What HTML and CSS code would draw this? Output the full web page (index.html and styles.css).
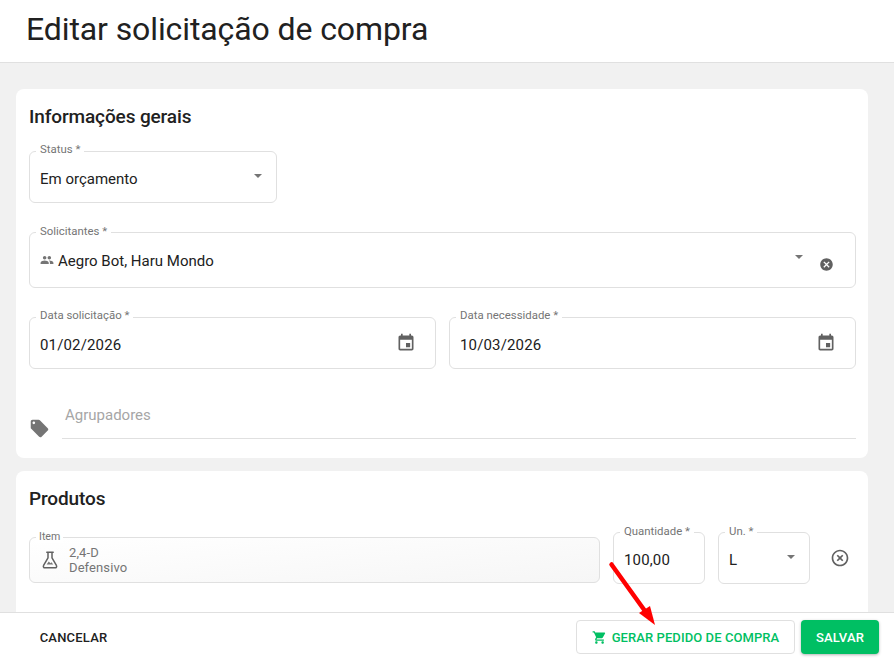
FILE: index.html
```html
<!DOCTYPE html>
<html lang="pt-BR">
<head>
<meta charset="utf-8">
<title>Editar solicitação de compra</title>
<link rel="stylesheet" href="styles.css">
</head>
<body>
<div class="page">
  <header class="topbar"><h1>Editar solicitação de compra</h1></header>
  <main class="content">
    <section class="card card-general">
      <h2>Informações gerais</h2>
      <div class="field field-status">
        <span class="float-label">Status *</span>
        <span class="value">Em orçamento</span>
        <span class="caret"></span>
      </div>
      <div class="field field-people">
        <span class="float-label">Solicitantes *</span>
        <svg class="icon-people" viewBox="0 0 24 24"><path d="M16 11c1.66 0 2.99-1.34 2.99-3S17.66 5 16 5c-1.66 0-3 1.34-3 3s1.34 3 3 3zm-8 0c1.66 0 2.99-1.34 2.99-3S9.66 5 8 5C6.34 5 5 6.34 5 8s1.34 3 3 3zm0 2c-2.33 0-7 1.17-7 3.5V19h14v-2.5c0-2.33-4.67-3.5-7-3.5zm8 0c-.29 0-.62.02-.97.05 1.16.84 1.97 1.97 1.97 3.45V19h6v-2.5c0-2.33-4.67-3.5-7-3.5z"/></svg>
        <span class="value">Aegro Bot, Haru Mondo</span>
        <span class="caret caret-people"></span>
        <svg class="icon-clear" viewBox="0 0 24 24"><path d="M12 2C6.47 2 2 6.47 2 12s4.47 10 10 10 10-4.47 10-10S17.53 2 12 2zm5 13.59L15.59 17 12 13.41 8.41 17 7 15.59 10.59 12 7 8.41 8.41 7 12 10.59 15.59 7 17 8.41 13.41 12 17 15.59z"/></svg>
      </div>
      <div class="date-row">
        <div class="field field-date">
          <span class="float-label">Data solicitação *</span>
          <span class="value value-date">01/02/2026</span>
          <svg class="icon-event" viewBox="0 0 24 24"><path d="M17 12h-5v5h5v-5zM16 1v2H8V1H6v2H5c-1.11 0-1.99.9-1.99 2L3 19c0 1.1.89 2 2 2h14c1.1 0 2-.9 2-2V5c0-1.1-.9-2-2-2h-1V1h-2zm3 18H5V8h14v11z"/></svg>
        </div>
        <div class="field field-date">
          <span class="float-label">Data necessidade *</span>
          <span class="value value-date">10/03/2026</span>
          <svg class="icon-event" viewBox="0 0 24 24"><path d="M17 12h-5v5h5v-5zM16 1v2H8V1H6v2H5c-1.11 0-1.99.9-1.99 2L3 19c0 1.1.89 2 2 2h14c1.1 0 2-.9 2-2V5c0-1.1-.9-2-2-2h-1V1h-2zm3 18H5V8h14v11z"/></svg>
        </div>
      </div>
      <div class="tags-row">
        <svg class="icon-tag" viewBox="0 0 24 24"><path d="M21.41 11.58l-9-9C12.05 2.22 11.55 2 11 2H4c-1.1 0-2 .9-2 2v7c0 .55.22 1.05.59 1.42l9 9c.36.36.86.58 1.41.58.55 0 1.05-.22 1.41-.59l7-7c.37-.36.59-.86.59-1.41 0-.55-.23-1.06-.59-1.42zM5.5 7C4.67 7 4 6.33 4 5.5S4.67 4 5.5 4 7 4.67 7 5.5 6.33 7 5.5 7z"/></svg>
        <div class="tags-input">Agrupadores</div>
      </div>
    </section>
    <section class="card card-products">
      <h2>Produtos</h2>
      <div class="product-row">
        <div class="field field-item">
          <span class="float-label label-item">Item</span>
          <svg class="icon-flask" viewBox="0 0 16 18"><path class="flask-outline" d="M4.8 1.2h6.4M6 1.2v5.6L1.6 14.4c-.7 1.1.1 2.4 1.3 2.4h10.2c1.2 0 2-1.3 1.3-2.4L10 6.8V1.2"/><path class="flask-liquid" d="M4.6 13.6l2.2-3 1.6 1.6 1-1 1.9 2.4z"/></svg>
          <div class="item-text"><span>2,4-D</span><span>Defensivo</span></div>
        </div>
        <div class="field field-qty">
          <span class="float-label">Quantidade *</span>
          <span class="value value-date">100,00</span>
        </div>
        <div class="field field-unit">
          <span class="float-label">Un. *</span>
          <span class="value">L</span>
          <span class="caret"></span>
        </div>
        <svg class="icon-remove" viewBox="0 0 24 24"><path d="M14.59 8L12 10.59 9.41 8 8 9.41 10.59 12 8 14.59 9.41 16 12 13.41 14.59 16 16 14.59 13.41 12 16 9.41 14.59 8zM12 2C6.47 2 2 6.47 2 12s4.47 10 10 10 10-4.47 10-10S17.53 2 12 2zm0 18c-4.41 0-8-3.59-8-8s3.59-8 8-8 8 3.59 8 8-3.59 8-8 8z"/></svg>
      </div>
    </section>
  </main>
  <footer class="actions">
    <button class="btn btn-cancel" type="button">CANCELAR</button>
    <button class="btn btn-order" type="button">
      <svg class="icon-cart" viewBox="0 0 24 24"><path d="M7 18c-1.1 0-1.99.9-1.99 2S5.9 22 7 22s2-.9 2-2-.9-2-2-2zM1 2v2h2l3.6 7.59-1.35 2.45c-.16.28-.25.61-.25.96 0 1.1.9 2 2 2h12v-2H7.42c-.14 0-.25-.11-.25-.25l.03-.12.9-1.63h7.45c.75 0 1.41-.41 1.75-1.03l3.58-6.49c.08-.14.12-.31.12-.48 0-.55-.45-1-1-1H5.21l-.94-2H1zm16 16c-1.1 0-1.99.9-1.99 2s.89 2 1.99 2 2-.9 2-2-.9-2-2-2z"/></svg>
      GERAR PEDIDO DE COMPRA
    </button>
    <button class="btn btn-save" type="button">SALVAR</button>
  </footer>
  <svg class="annotation" viewBox="0 0 894 658"><path class="annotation-line" d="M611.5 564.5L645 611"/><path class="annotation-head" d="M655 625L639 613L650 606z"/></svg>
</div>
</body>
</html>
```
FILE: styles.css
```css
* { box-sizing: border-box; }
html, body { margin: 0; height: 100%; }
body { font-family: Roboto, "Liberation Sans", sans-serif; color: #212121; background: #f1f1f1; }
.page { position: relative; width: 894px; height: 658px; display: flex; flex-direction: column; overflow: hidden; }

.topbar { height: 63px; flex: none; background: #fff; border-bottom: 1px solid #e0e0e0; padding: 10px 26px 0; }
.topbar h1 { margin: 0; font-size: 32px; line-height: 38px; font-weight: 400; letter-spacing: -0.1px; color: #212121; }

.content { flex: 1; min-height: 0; overflow: hidden; padding: 26px 26px 0 16px; display: flex; flex-direction: column; gap: 13px; }
.card { flex: none; width: 852px; background: #fff; border-radius: 8px; padding: 17px 12px 0 13px; }
.card-general { height: 369px; }
.card-products { height: 200px; }
.card h2 { margin: 0; font-size: 19px; line-height: 22px; font-weight: 500; letter-spacing: -0.12px; color: #212121; }

.field { position: relative; display: flex; align-items: center; border: 1px solid #e0e0e0; border-radius: 6px; padding: 0 10px; background: #fff; }
.float-label { position: absolute; left: 6px; top: -10px; padding: 0 4px; background: #fff; font-size: 11.4px; line-height: 14px; color: #757575; white-space: nowrap; }
.value { margin-top: 4px; font-size: 15px; line-height: 20px; color: #212121; white-space: nowrap; }
.value-date { letter-spacing: 0.15px; }
.caret { width: 0; height: 0; margin-left: auto; border-left: 4px solid transparent; border-right: 4px solid transparent; border-top: 4px solid #757575; }

.field-status { width: 248px; height: 52px; margin-top: 23px; }
.field-status .caret { margin: -2px 4px 0 auto; }
.field-people { height: 56px; margin-top: 29px; }
.field-people .float-label, .field-qty .float-label, .field-unit .float-label { top: -9px; }
.icon-people { width: 14px; height: 14px; margin: 0 4px 0 0; fill: #757575; flex: none; }
.field-people .value { margin-top: 2px; }
.caret-people { margin: -6px 0 0 auto; }
.icon-clear { width: 15px; height: 15px; margin: 8px 11px 0 16px; fill: #616161; flex: none; }

.date-row { display: grid; grid-template-columns: 407px 407px; gap: 13px; margin-top: 29px; }
.field-date { height: 52px; }
.icon-event { width: 20px; height: 20px; margin: 0 9px 0 auto; fill: #616161; flex: none; }

.tags-row { display: flex; align-items: flex-end; margin-top: 30px; }
.icon-tag { width: 21px; height: 21px; margin: 0 12px 0 0; fill: #757575; flex: none; }
.tags-input { flex: 1; height: 40px; border-bottom: 1px solid #e0e0e0; padding: 6px 0 0 3px; font-size: 15px; line-height: 20px; color: #a6a6a6; }

.product-row { display: flex; align-items: center; margin-top: 22px; }
.field-item { width: 571px; height: 46px; margin: 4px 13px 0 0; background: linear-gradient(175deg, #fff 0%, #f6f6f6 100%); }
.label-item { left: 6px; top: -8px; padding: 0 3px; font-size: 10.6px; line-height: 13px; }
.icon-flask { width: 16px; height: 18px; margin: 0 11px 0 2px; flex: none; }
.flask-outline { fill: none; stroke: #616161; stroke-width: 1.5; stroke-linejoin: round; stroke-linecap: round; }
.flask-liquid { fill: #757575; }
.item-text { display: flex; flex-direction: column; font-size: 13px; line-height: 15px; letter-spacing: 0.1px; color: #757575; }
.field-qty { width: 92px; height: 52px; margin-right: 13px; }
.field-unit { width: 92px; height: 52px; }
.field-unit .caret { margin: -2px 4px 0 auto; }
.icon-remove { width: 20px; height: 20px; margin-left: 20px; fill: #616161; flex: none; }

.actions { height: 46px; flex: none; background: #fff; border-top: 1px solid #e0e0e0; display: flex; align-items: center; padding: 3px 15px 0 29px; }
.btn { font-family: inherit; font-size: 13px; font-weight: 500; letter-spacing: 0.2px; height: 34px; border-radius: 4px; background: none; border: 0; cursor: pointer; white-space: nowrap; display: flex; align-items: center; justify-content: center; padding: 0; }
.btn-cancel { color: #212121; width: 89px; margin-right: auto; }
.btn-order { width: 219px; margin-right: 6px; color: #00bf63; border: 1px solid #e0e0e0; background: #fff; gap: 5px; letter-spacing: 0.08px; }
.icon-cart { width: 15px; height: 15px; fill: #00bf63; flex: none; }
.btn-save { width: 78px; color: #fff; background: #00bf63; box-shadow: 0 1px 3px rgba(0,0,0,.3); }

.annotation { position: absolute; inset: 0; width: 894px; height: 658px; pointer-events: none; }
.annotation-line { stroke: #f00; stroke-width: 4.5; fill: none; stroke-linecap: round; }
.annotation-head { fill: #f00; }
```
